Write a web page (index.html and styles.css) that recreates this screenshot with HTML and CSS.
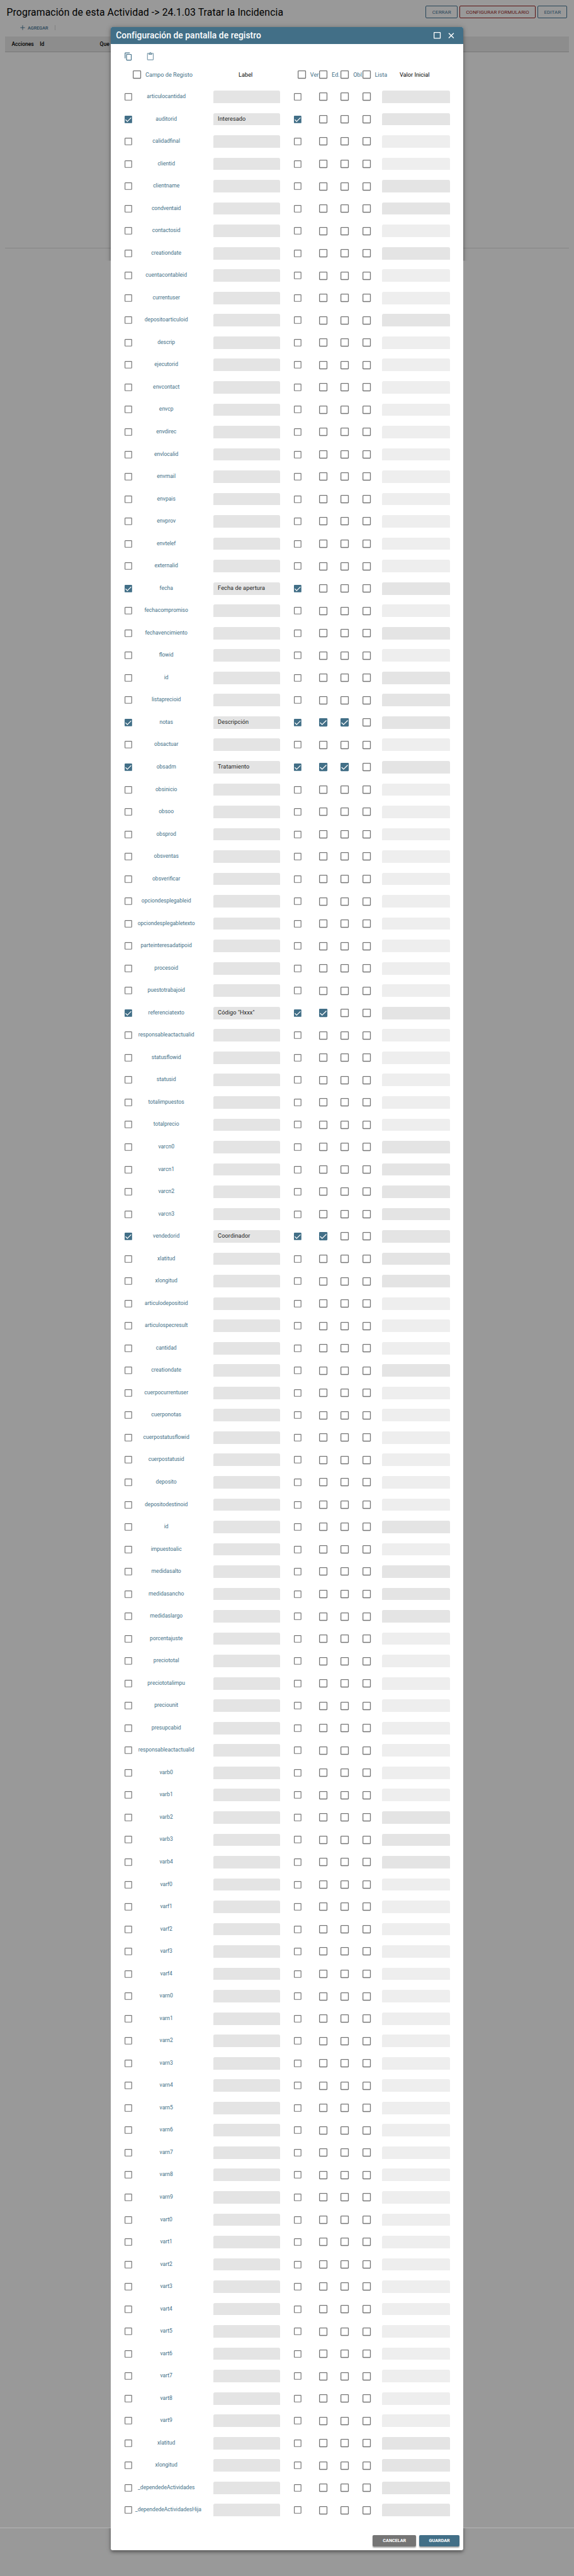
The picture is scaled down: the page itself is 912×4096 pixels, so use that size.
FILE: index.html
```html
<!DOCTYPE html>
<html lang="es">
<head>
<meta charset="utf-8">
<title>Configuración de pantalla de registro</title>
<link rel="stylesheet" href="styles.css">
</head>
<body>
<div class="page">
  <header class="topbar">
    <h1 class="page-title">Programación de esta Actividad -&gt; 24.1.03 Tratar la Incidencia</h1>
    <div class="actions">
      <button class="btn btn-close">CERRAR</button>
      <button class="btn btn-danger">CONFIGURAR FORMULARIO</button>
      <button class="btn btn-edit">EDITAR</button>
    </div>
  </header>
  <div class="toolbar">
    <svg class="plus" viewBox="0 0 12 12"><path d="M6 0.5V11.5M0.5 6H11.5" stroke="currentColor" stroke-width="1.4" fill="none"/></svg>
    <span class="add">AGREGAR</span>
    <span class="divider"></span>
  </div>
  <div class="table-head"><span class="th-acc">Acciones</span><span class="th-id">Id</span><span>Que</span></div>
  <div class="table-body"></div>
  <div class="page-end"></div>

  <section class="modal">
    <header class="modal-head">
      <h2 class="modal-title">Configuración de pantalla de registro</h2>
      <svg class="win" viewBox="0 0 17 16"><rect x="1" y="1" width="15" height="14" rx="0.5" fill="none" stroke="#fff" stroke-width="2"/></svg>
      <svg class="x" viewBox="0 0 14 14"><path d="M1 1L13 13M13 1L1 13" stroke="#fff" stroke-width="2.2" fill="none"/></svg>
    </header>
    <div class="modal-tools">
      <svg class="tool" viewBox="0 0 24 24"><path fill="currentColor" d="M16 1H4c-1.1 0-2 .9-2 2v14h2V3h12V1zm3 4H8c-1.1 0-2 .9-2 2v14c0 1.1.9 2 2 2h11c1.1 0 2-.9 2-2V7c0-1.100-.9-2-2-2zm0 16H8V7h11v14z"/></svg>
      <svg class="tool paste" viewBox="0 0 24 24"><path fill="currentColor" d="M19 2h-4.180C14.400.84 13.300 0 12 0c-1.300 0-2.400.84-2.820 2H5c-1.100 0-2 .9-2 2v16c0 1.100.9 2 2 2h14c1.100 0 2-.9 2-2V4c0-1.100-.9-2-2-2zm-7 0c.55 0 1 .45 1 1s-.45 1-1 1-1-.45-1-1 .45-1 1-1zm7 18H5V4h2v3h10V4h2v16z"/></svg>
    </div>
    <div class="grid-head" id="head"></div>
    <div id="rows"></div>
    <footer class="modal-foot">
      <button class="raised grey">CANCELAR</button>
      <button class="raised blue">GUARDAR</button>
    </footer>
  </section>
</div>
<script src="app.js"></script>
</body>
</html>
```
FILE: styles.css
```css
* { box-sizing: border-box; }
body { margin: 0; background: #999; font-family: Roboto, "Liberation Sans", sans-serif; }
.page { position: relative; width: 1386px; height: 6225px; zoom: 0.65801; overflow: hidden; background: #999; display: flex; flex-direction: column; }
h1, h2 { margin: 0; white-space: nowrap; }
button { font-family: inherit; padding: 0; margin: 0; }
svg { display: block; flex: none; overflow: visible; }

.topbar { height: 58px; padding: 0 16px; display: flex; justify-content: space-between; align-items: center; }
.page-title { font-size: 24px; font-weight: 400; line-height: 32px; letter-spacing: .14px; color: #000; }
.actions { display: flex; gap: 5px; }
.btn { height: 30px; background: none; border: 1.5px solid #28465a; border-radius: 3px; color: #28465a; font-size: 12px; font-weight: 400; letter-spacing: .15px; }
.btn-close { width: 77px; }
.btn-danger { width: 183px; border-color: #5c1414; color: #5c1414; }
.btn-edit { width: 72px; }
.toolbar { height: 30px; padding: 0 0 11px 48px; display: flex; align-items: center; color: #28465a; }
.plus { width: 12px; height: 12px; }
.add { margin-left: 7px; width: 65px; font-size: 11px; font-weight: 500; }
.divider { width: 1px; height: 12px; background: #808080; }
.table-head { margin: 0 12px; height: 38px; padding-left: 16px; display: flex; align-items: center; background: #8d8d8d; border-bottom: 1.5px solid #777; color: #000; font-size: 13px; font-weight: 500; flex: none; }
.th-acc { width: 68px; }
.th-id { width: 145px; }
.table-body { margin: 0 12px; height: 474px; border-bottom: 1.5px solid #858585; flex: none; }
.page-end { height: 5509px; border-bottom: 1.5px solid #b5b5b5; flex: none; }

.modal { position: absolute; z-index: 0; left: 268px; top: 66px; width: 850px; height: 6096px; background: #fff; border-radius: 4px; color: #426f87; }
/* The shadow shows only beside the first and last screenfuls of the dialog. */
.modal::before { content: ""; position: absolute; inset: 0; z-index: -1; border-radius: 4px; box-shadow: 0 4px 8px rgba(0,0,0,.35), 0 1px 14px rgba(0,0,0,.15);
  clip-path: polygon(-30px -30px, 880px -30px, 880px 564px, 850px 564px, 850px 6043px, 880px 6043px, 880px 6130px, -30px 6130px, -30px 6043px, 0 6043px, 0 564px, -30px 564px); }
.modal-head { height: 40px; padding: 0 21px 0 12px; display: flex; align-items: center; background: #426f87; border-radius: 4px 4px 0 0; color: #fff; }
.modal-title { flex: 1; font-size: 21px; font-weight: 500; line-height: 38px; letter-spacing: .12px; }
.win { width: 17px; height: 16px; margin-right: 18px; }
.x { width: 15px; height: 14px; }
.modal-tools { height: 47px; padding: 20px 0 0 32px; display: flex; gap: 32px; }
.tool { width: 21px; height: 21px; }
.paste { opacity: .7; }

.grid-head { height: 54px; padding-left: 53px; display: grid; grid-template-columns: 194px 204px 52px 52px 52px 90px 1fr; align-items: center; font-size: 14px; white-space: nowrap; }
.head-cell { display: flex; align-items: center; gap: 10px; }
.dark { color: #000; }
.head-label { width: 156px; text-align: center; }
.row { height: 54px; padding-left: 33px; display: grid; grid-template-columns: 18px 196px 195px 61px 52px 52px 48px 163px; align-items: center; }
.name { padding: 0 38.5px 2px 7.5px; text-align: center; font-size: 13px; line-height: 16px; white-space: nowrap; }
.field { width: 162px; height: 30px; padding: 0 11px 2px; border-radius: 4px 4px 0 0; background: #e4e4e4; color: #222; font-size: 14px; line-height: 28px; letter-spacing: .1px; white-space: nowrap; }
.value { width: 163px; }
.off { background: #eee; }
.cb18 { width: 18px; height: 18px; }
.cb20 { width: 20px; height: 20px; }
.modal-foot { padding: 33px 8px 0 0; display: flex; justify-content: flex-end; gap: 7px; }
.raised { height: 28px; border: 0; border-radius: 3px; color: #fff; font-size: 11px; font-weight: 700; box-shadow: 0 2px 3px rgba(0,0,0,.35); padding-bottom: 3px; }
.grey { width: 105px; background: #757575; }
.blue { width: 98px; background: #426f87; }
```
FILE: app.js
```js
// Each entry: field name, label, number of checks among Ver/Ed./Obl.; "*" after the name = initial value enabled.
const source = `articulocantidad* auditorid*|Interesado|1 calidadfinal clientid clientname* condventaid* contactosid creationdate*
cuentacontableid currentuser depositoarticuloid* descrip ejecutorid envcontact envcp envdirec envlocalid envmail envpais envprov envtelef
externalid fecha*|Fecha_de_apertura|1 fechacompromiso fechavencimiento* flowid id* listaprecioid* notas*|Descripción|3 obsactuar
obsadm*|Tratamiento|3 obsinicio obsoo obsprod obsventas obsverificar opciondesplegableid opciondesplegabletexto parteinteresadatipoid
procesoid puestotrabajoid referenciatexto*|Código_"Hxxx"|2 responsableactactualid statusflowid statusid totalimpuestos totalprecio
varcn0* varcn1* varcn2* varcn3* vendedorid*|Coordinador|2 xlatitud* xlongitud* articulodepositoid articulospecresult cantidad
creationdate* cuerpocurrentuser cuerponotas cuerpostatusflowid cuerpostatusid deposito depositodestinoid id* impuestoalic
medidasalto* medidasancho* medidaslargo* porcentajuste preciototal preciototalimpu preciounit presupcabid responsableactactualid
varb0 varb1 varb2* varb3* varb4* varf0 varf1 varf2 varf3 varf4 varn0 varn1 varn2 varn3 varn4 varn5 varn6 varn7 varn8 varn9
vart0 vart1 vart2 vart3 vart4 vart5 vart6 vart7 vart8 vart9 xlatitud* xlongitud* _dependedeActividades* _dependedeActividadesHija*`;

function box(size, on) {
  const body = on
    ? '<rect width="20" height="20" rx="2" fill="#426f87"/><path d="M2.500 10.600L7.300 15.400L17.500 5.200" fill="none" stroke="#fff" stroke-width="2"/>'
    : '<rect x="1" y="1" width="18" height="18" rx="1.2" fill="none" stroke="#757575" stroke-width="2"/>';
  return `<svg class="cb${size}" viewBox="0 0 20 20">${body}</svg>`;
}

document.getElementById('head').innerHTML =
  `<div class="head-cell">${box(20)}<span>Campo de Registo</span></div><div class="head-label dark">Label</div>` +
  ['Ver', 'Ed.', 'Obl.', 'Lista'].map(t => `<div class="head-cell">${box(20)}<span>${t}</span></div>`).join('') +
  '<div class="dark">Valor Inicial</div>';

document.getElementById('rows').innerHTML = source.split(/\s+/).map(item => {
  const [key, label = '', n = 0] = item.split('|');
  const enabled = key.endsWith('*');
  return `<div class="row">${box(18, n > 0)}<div class="name">${key.replace('*', '')}</div>` +
    `<div class="field">${label.replaceAll('_', ' ')}</div>` +
    `${box(18, n > 0)}${box(20, n > 1)}${box(20, n > 2)}${box(20)}` +
    `<div class="field value${enabled ? '' : ' off'}"></div></div>`;
}).join('');
```
